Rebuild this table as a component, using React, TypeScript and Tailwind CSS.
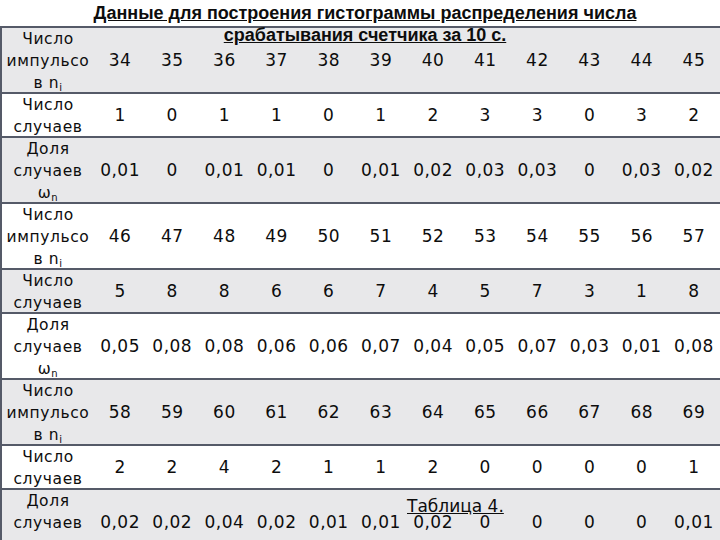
import React from "react";

type Kind = "imp" | "cnt" | "dol";

const rows: { kind: Kind; values: string[] }[] = [
  { kind: "imp", values: ["34", "35", "36", "37", "38", "39", "40", "41", "42", "43", "44", "45"] },
  { kind: "cnt", values: ["1", "0", "1", "1", "0", "1", "2", "3", "3", "0", "3", "2"] },
  { kind: "dol", values: ["0,01", "0", "0,01", "0,01", "0", "0,01", "0,02", "0,03", "0,03", "0", "0,03", "0,02"] },
  { kind: "imp", values: ["46", "47", "48", "49", "50", "51", "52", "53", "54", "55", "56", "57"] },
  { kind: "cnt", values: ["5", "8", "8", "6", "6", "7", "4", "5", "7", "3", "1", "8"] },
  { kind: "dol", values: ["0,05", "0,08", "0,08", "0,06", "0,06", "0,07", "0,04", "0,05", "0,07", "0,03", "0,01", "0,08"] },
  { kind: "imp", values: ["58", "59", "60", "61", "62", "63", "64", "65", "66", "67", "68", "69"] },
  { kind: "cnt", values: ["2", "2", "4", "2", "1", "1", "2", "0", "0", "0", "0", "1"] },
  { kind: "dol", values: ["0,02", "0,02", "0,04", "0,02", "0,01", "0,01", "0,02", "0", "0", "0", "0", "0,01"] },
];

function Label({ kind }: { kind: Kind }) {
  if (kind === "imp")
    return (
      <>
        <span>Число</span>
        <span>импульсо</span>
        <span>
          в n<sub className="text-[10px]">i</sub>
        </span>
      </>
    );
  if (kind === "cnt")
    return (
      <>
        <span>Число</span>
        <span>случаев</span>
      </>
    );
  return (
    <>
      <span>Доля</span>
      <span>случаев</span>
      <span>
        ω<sub className="text-[10px]">n</sub>
      </span>
    </>
  );
}

export default function App() {
  return (
    <div className="relative w-[720px] h-[540px] overflow-hidden bg-white text-[#0d0d0d] font-['DejaVu_Sans',sans-serif]">
      <div className="flex flex-col pt-[26px]">
        {rows.map((row, i) => (
          <div
            key={i}
            className={`grid grid-cols-[92px_repeat(12,1fr)] items-center border-t-2 border-[#555a68] border-l-2 shrink-0 ${
              row.kind === "cnt" ? "h-[44px]" : "h-[66px]"
            } ${i % 2 === 0 ? "bg-[#e8e8ea]" : "bg-white"}`}
          >
            <div className="flex flex-col items-center text-[15.5px] leading-[22px] tracking-[0.6px]">
              <Label kind={row.kind} />
            </div>
            {row.values.map((v, j) => (
              <div key={j} className="text-center text-[17px] tracking-[0.5px]">
                {v}
              </div>
            ))}
          </div>
        ))}
      </div>

      <div className="absolute top-[2px] left-0 w-full flex flex-col items-center pl-[10px] font-['Liberation_Sans',sans-serif] font-bold text-[18px] leading-[22px] underline">
        <span>Данные для построения гистограммы распределения числа</span>
        <span>срабатывания счетчика за 10 с.</span>
      </div>

      <div className="absolute left-[407px] top-[494px] text-[17px] underline">Таблица 4.</div>
    </div>
  );
}
